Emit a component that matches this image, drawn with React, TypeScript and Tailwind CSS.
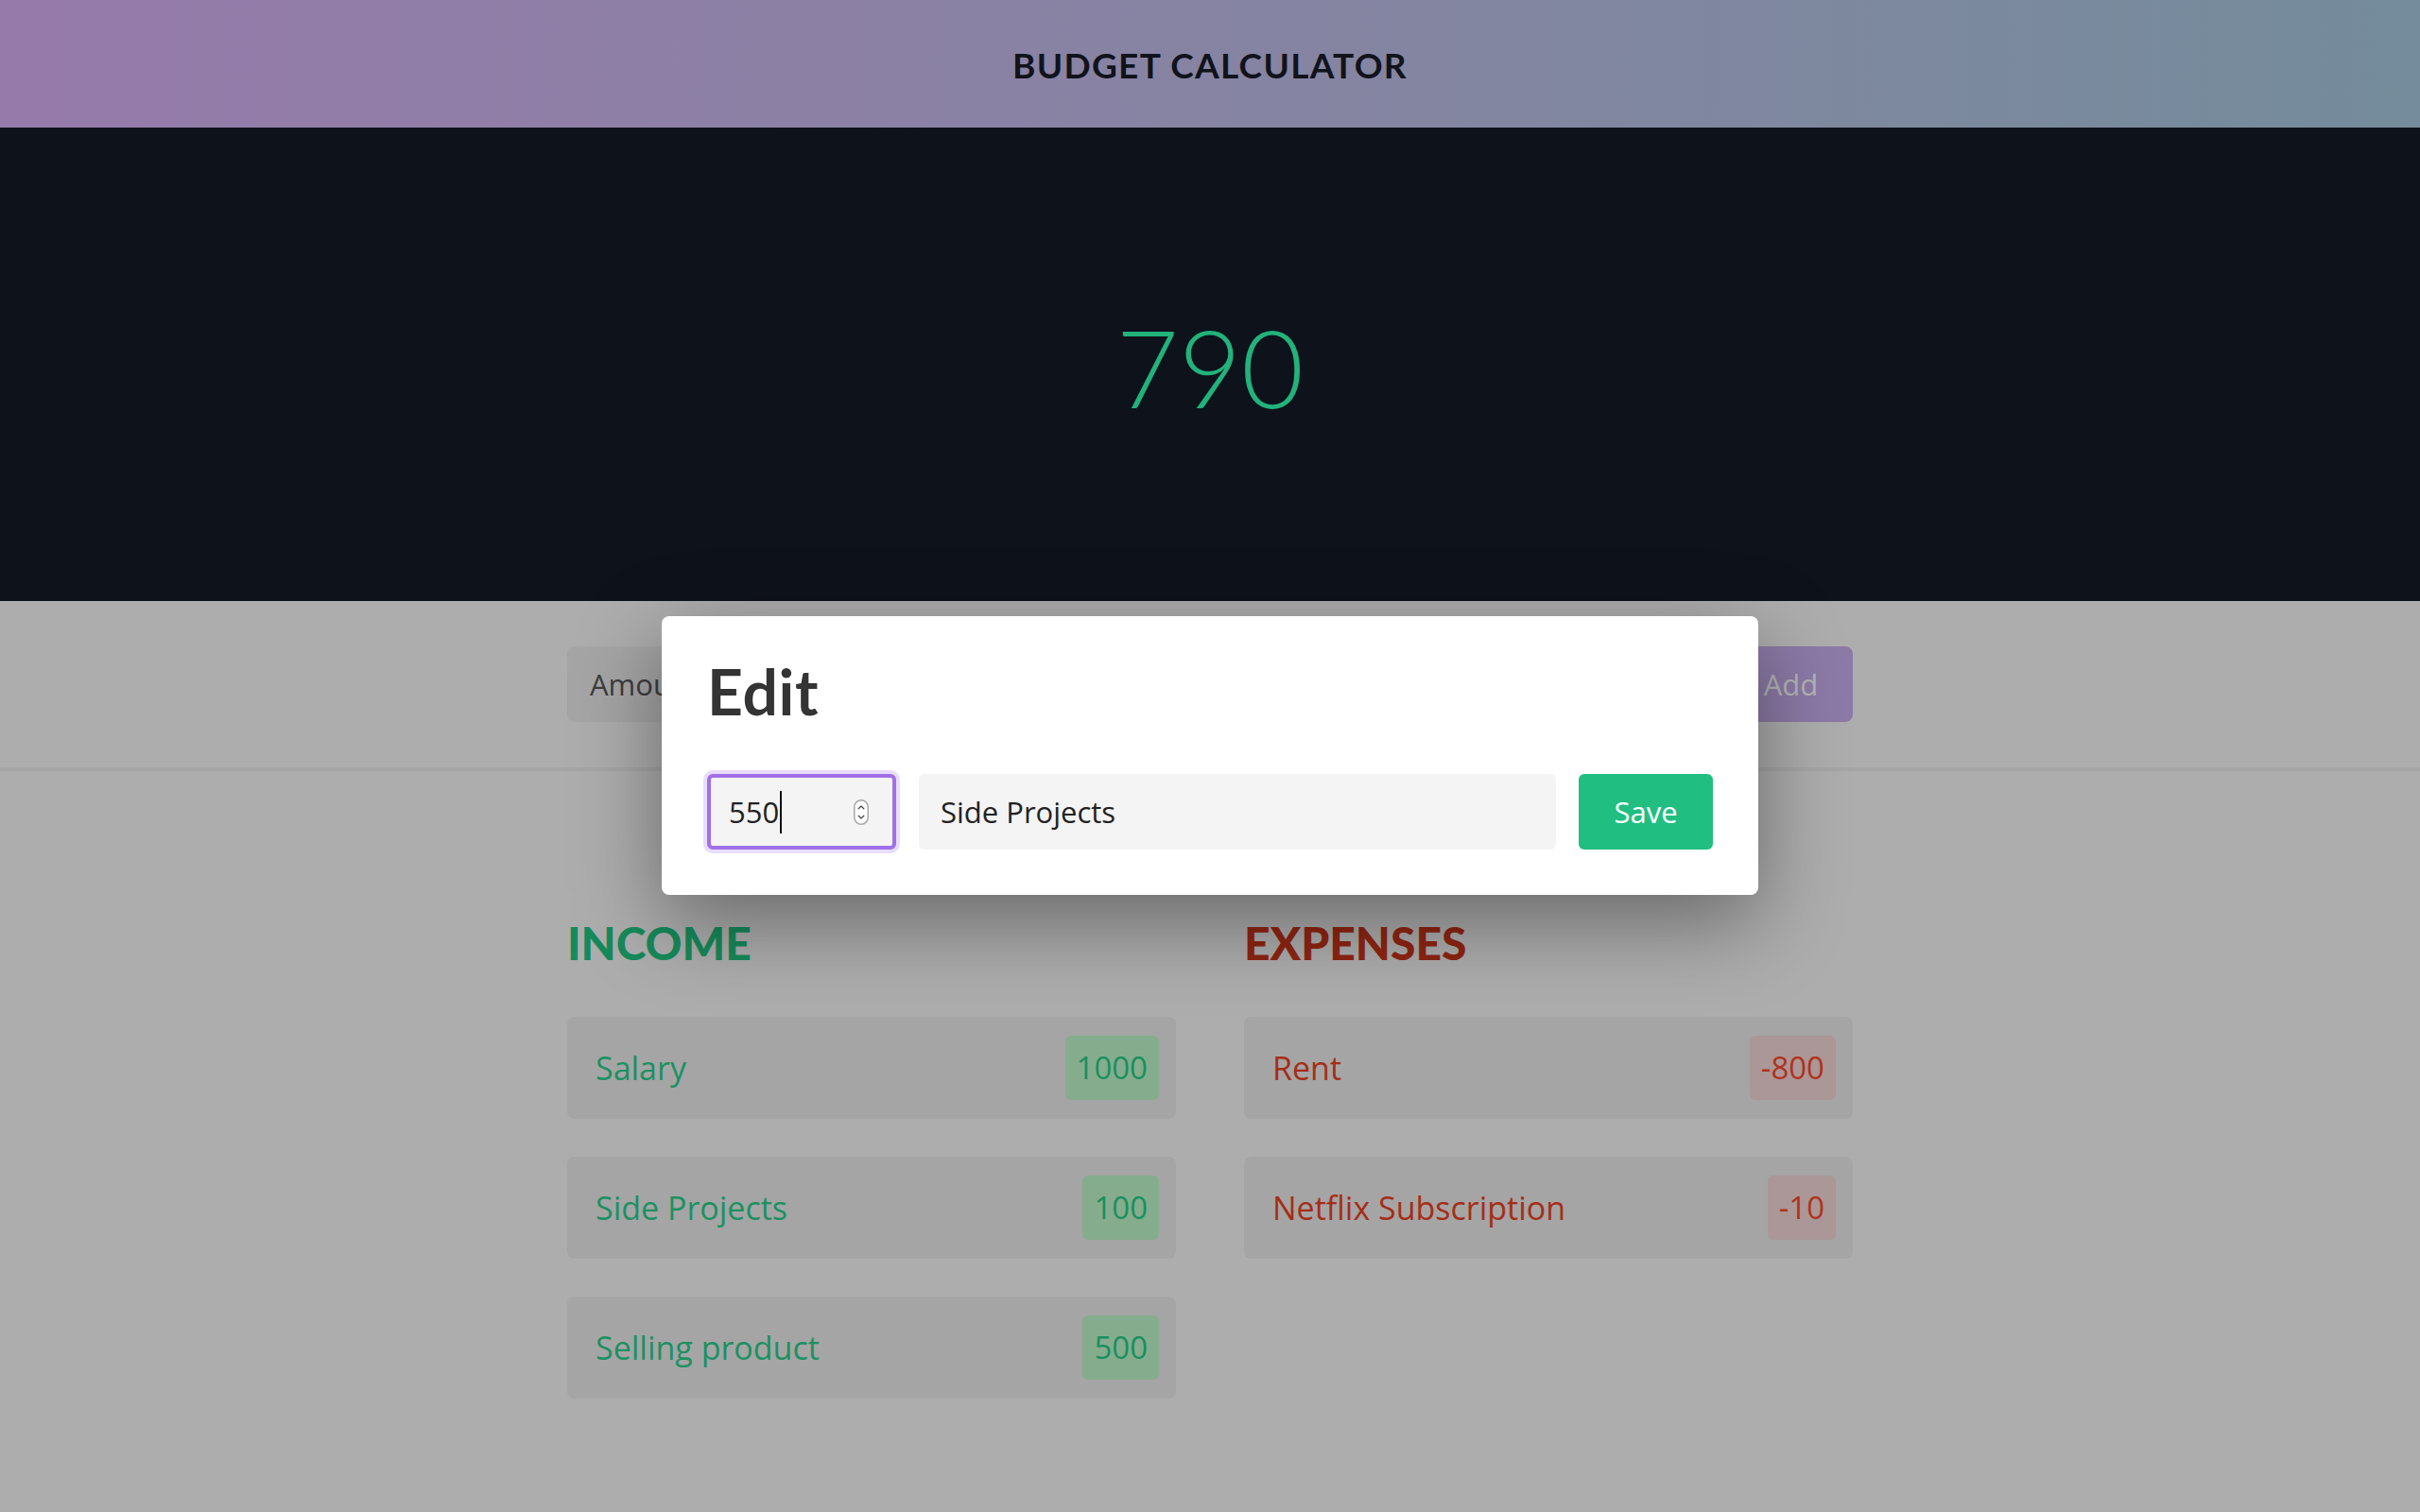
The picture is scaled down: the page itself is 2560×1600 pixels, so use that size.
import React from "react";

const income = [
  { label: "Salary", amount: "1000" },
  { label: "Side Projects", amount: "100" },
  { label: "Selling product", amount: "500" },
];

const expenses = [
  { label: "Rent", amount: "-800" },
  { label: "Netflix Subscription", amount: "-10" },
];

function Spinner() {
  return (
    <svg width="16" height="27" viewBox="0 0 16 27" className="shrink-0">
      <rect x="0.75" y="0.75" width="14.5" height="25.5" rx="7.25" fill="#ffffff" stroke="#a8a8a8" strokeWidth="1.5" />
      <path d="M5.2 9.8 L8 7 L10.8 9.8" fill="none" stroke="#4a4a4a" strokeWidth="1.3" strokeLinecap="round" strokeLinejoin="round" />
      <path d="M5.2 17.2 L8 20 L10.8 17.2" fill="none" stroke="#4a4a4a" strokeWidth="1.3" strokeLinecap="round" strokeLinejoin="round" />
    </svg>
  );
}

function Entry({ label, amount, kind }: { label: string; amount: string; kind: "income" | "expense" }) {
  const isIncome = kind === "income";
  return (
    <div className="h-[108px] rounded-lg bg-[#a5a5a5] flex items-center justify-between pl-[30px] pr-[18px]">
      <span className={isIncome ? "text-[34px] text-[#1b9163]" : "text-[34px] text-[#a52d17]"}>{label}</span>
      <span
        className={
          isIncome
            ? "h-[68px] px-3 rounded-md bg-[#85ad8d] text-[#18905f] text-[33px] flex items-center"
            : "h-[68px] px-3 rounded-md bg-[#ab9797] text-[#b0321b] text-[33px] flex items-center"
        }
      >
        {amount}
      </span>
    </div>
  );
}

export default function App() {
  return (
    <div className="min-h-screen bg-[#adadad] font-['Open_Sans',sans-serif]">
      {/* Header */}
      <header className="h-[135px] bg-gradient-to-r from-[#967aaa] to-[#748c9b] flex items-center justify-center">
        <h1 className="font-['Lato',sans-serif] font-bold text-[37px] leading-none tracking-[0.035em] text-[#11131c] pt-px">
          BUDGET CALCULATOR
        </h1>
      </header>

      {/* Balance */}
      <section className="h-[501px] bg-[#0e121b] flex items-center justify-center">
        <div className="font-['Lato',sans-serif] font-light text-[114px] leading-none text-[#22b27b] pt-1">790</div>
      </section>

      {/* Content */}
      <section className="relative">
        <div className="border-b-4 border-[#a5a5a5]">
          <div className="w-[1360px] mx-auto py-12 flex gap-6">
            <div className="w-[280px] h-20 rounded-lg bg-[#a5a5a5] flex items-center pl-[24px] text-[31px] text-[#3d3d3d]">
              Amount
            </div>
            <div className="flex-1 h-20 rounded-lg bg-[#a5a5a5] flex items-center pl-[24px] text-[31px] text-[#3d3d3d]">
              Description
            </div>
            <button className="w-[131px] h-20 rounded-lg bg-[#8c7aa7] text-[31px] text-[#b4b4b4]">Add</button>
          </div>
        </div>

        <div className="w-[1360px] mx-auto pt-[158px] pb-20 grid grid-cols-2 gap-x-[72px]">
          <div>
            <h2 className="font-['Lato',sans-serif] font-black text-[48px] leading-none text-[#168a5b] mb-[54px]">INCOME</h2>
            <div className="flex flex-col gap-10">
              {income.map((item) => (
                <Entry key={item.label} label={item.label} amount={item.amount} kind="income" />
              ))}
            </div>
          </div>
          <div>
            <h2 className="font-['Lato',sans-serif] font-black text-[48px] leading-none text-[#8f2512] mb-[54px]">EXPENSES</h2>
            <div className="flex flex-col gap-10">
              {expenses.map((item) => (
                <Entry key={item.label} label={item.label} amount={item.amount} kind="expense" />
              ))}
            </div>
          </div>
        </div>

        {/* Edit modal */}
        <div className="absolute top-4 left-1/2 -translate-x-1/2 w-[1160px] bg-white rounded-lg p-12 shadow-[0_28px_90px_rgba(0,0,0,0.4)]">
          <h2 className="font-['Lato',sans-serif] font-bold text-[66px] leading-none tracking-[0.01em] text-[#343434] mb-[54px] -mt-px">
            Edit
          </h2>
          <div className="flex gap-6 h-20">
            <div className="w-[200px] h-20 rounded-md border-4 border-[#a070e8] bg-[#f4f4f4] shadow-[0_0_0_4px_#e9ddfb] flex items-center pl-[19px] pr-[25px]">
              <span className="text-[31px] text-[#222222]">550</span>
              <span className="w-[2px] h-[45px] bg-[#111111] ml-px" />
              <span className="flex-1" />
              <Spinner />
            </div>
            <div className="flex-1 h-20 rounded-md bg-[#f4f4f4] flex items-center pl-[23px] text-[31px] text-[#222222]">
              Side Projects
            </div>
            <button className="w-[142px] h-20 rounded-md bg-[#20bf81] text-white text-[31px]">Save</button>
          </div>
        </div>
      </section>
    </div>
  );
}
